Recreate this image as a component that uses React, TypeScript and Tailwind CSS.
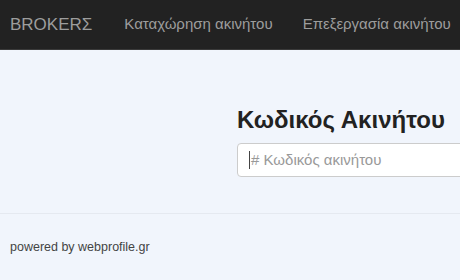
export default function App() {
  return (
    <div className="min-h-[280px] w-[460px] overflow-hidden bg-[#f1f5fc] font-['Liberation_Sans',sans-serif]">
      <nav className="flex h-[50px] items-center border-b border-[#3a3a3a] bg-[#222222] px-[10px]">
        <span className="text-[17px] text-[#9d9d9d]">BROKERΣ</span>
        <div className="ml-[32px] flex gap-[30px] whitespace-nowrap text-[15px] text-[#9d9d9d]">
          <span>Καταχώρηση ακινήτου</span>
          <span>Επεξεργασία ακινήτου</span>
        </div>
      </nav>

      <main className="flex h-[163px] flex-col pl-[237px] pt-[55px]">
        <h1 className="whitespace-nowrap text-[24px] leading-[30px] font-bold text-[#222]">
          Κωδικός Ακινήτου
        </h1>
        <div className="mt-[8px] flex h-[34px] w-[260px] items-center rounded-[4px] border border-[#cccccc] bg-white px-[11px] text-[15px] text-[#999]">
          <span className="mr-px h-[18px] w-px bg-[#444]" />
          # Κωδικός ακινήτου
        </div>
      </main>

      <footer className="border-t border-[#e5e9f0] px-[10px] pt-[24px] text-[12.5px] text-[#444]">
        powered by webprofile.gr
      </footer>
    </div>
  );
}
